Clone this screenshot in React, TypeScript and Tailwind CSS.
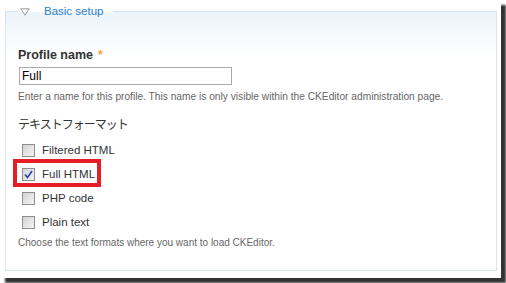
import React from 'react';

const formats = [
  { name: 'Filtered HTML', checked: false },
  { name: 'Full HTML', checked: true },
  { name: 'PHP code', checked: false },
  { name: 'Plain text', checked: false },
];

const Checkbox = ({ checked }: { checked: boolean }) => (
  <span className="w-[13px] h-[13px] border border-[#8f8f8f] bg-gradient-to-br from-[#d4d4d4] to-[#f4f4f4] flex items-center justify-center shrink-0">
    {checked && (
      <svg width="9" height="9" viewBox="0 0 9 9">
        <path d="M1 4.5 L3.5 7.5 L8 1" fill="none" stroke="#2a3fb0" strokeWidth="1.6" />
      </svg>
    )}
  </span>
);

const App = () => {
  return (
    <div className="w-[506px] h-[283px] bg-white" style={{ fontFamily: '"Liberation Sans", Arial, "Noto Sans CJK JP", sans-serif' }}>
      <div className="w-[501px] h-[278px] bg-white shadow-[5px_5px_2px_rgba(0,0,0,0.8)] pt-[4px] pl-[5px]">
        <fieldset className="w-[492px] h-[267px] border border-[#d6e5f1] bg-gradient-to-b from-[#ecf4fa] to-white to-[45px] px-[12px]">
          <legend className="ml-0 px-[2px] flex items-center gap-[14px] h-[14px]">
            <svg width="10" height="8" viewBox="0 0 10 8" className="mt-[1px]">
              <path d="M0.8 0.8 H9.2 L5 7.2 Z" fill="white" stroke="#9a9a9a" strokeWidth="1" />
            </svg>
            <span className="text-[11.5px] text-[#2e7ec9] leading-[14px] pr-[8px]">Basic setup</span>
          </legend>

          <div className="mt-[30px] text-[12.5px] font-bold text-[#333] leading-[15px] flex items-center gap-[5px]">
            Profile name <span className="text-[#f3a33a] text-[12px]">*</span>
          </div>
          <input
            type="text"
            defaultValue="Full"
            className="mt-[4px] ml-[1px] w-[213px] h-[18px] border border-[#a9a9a9] px-[2px] text-[12px] text-black leading-[16px] outline-none"
          />
          <div className="mt-[3px] text-[10.2px] text-[#666] leading-[13px] whitespace-nowrap">
            Enter a name for this profile. This name is only visible within the CKEditor administration page.
          </div>

          <div className="mt-[12px] text-[12px] tracking-[-1px] text-[#333] leading-[18px]" style={{ fontFamily: '"Noto Sans CJK JP", sans-serif' }}>
            テキストフォーマット
          </div>

          <div className="mt-[7px] flex flex-col">
            {formats.map((f) => (
              <div key={f.name} className="relative h-[24px] flex items-start gap-[7px] pl-[4px] pt-[4px]">
                {f.checked && (
                  <span className="absolute left-[-5px] top-[-5px] w-[88px] h-[28px] border-[4px] border-[#e71d25]" />
                )}
                <Checkbox checked={f.checked} />
                <span className="text-[11.5px] text-[#333] leading-[14px] -mt-[1px]">{f.name}</span>
              </div>
            ))}
          </div>

          <div className="mt-0 text-[10px] text-[#666] leading-[13px] whitespace-nowrap">
            Choose the text formats where you want to load CKEditor.
          </div>
        </fieldset>
      </div>
    </div>
  );
};

export default App;
